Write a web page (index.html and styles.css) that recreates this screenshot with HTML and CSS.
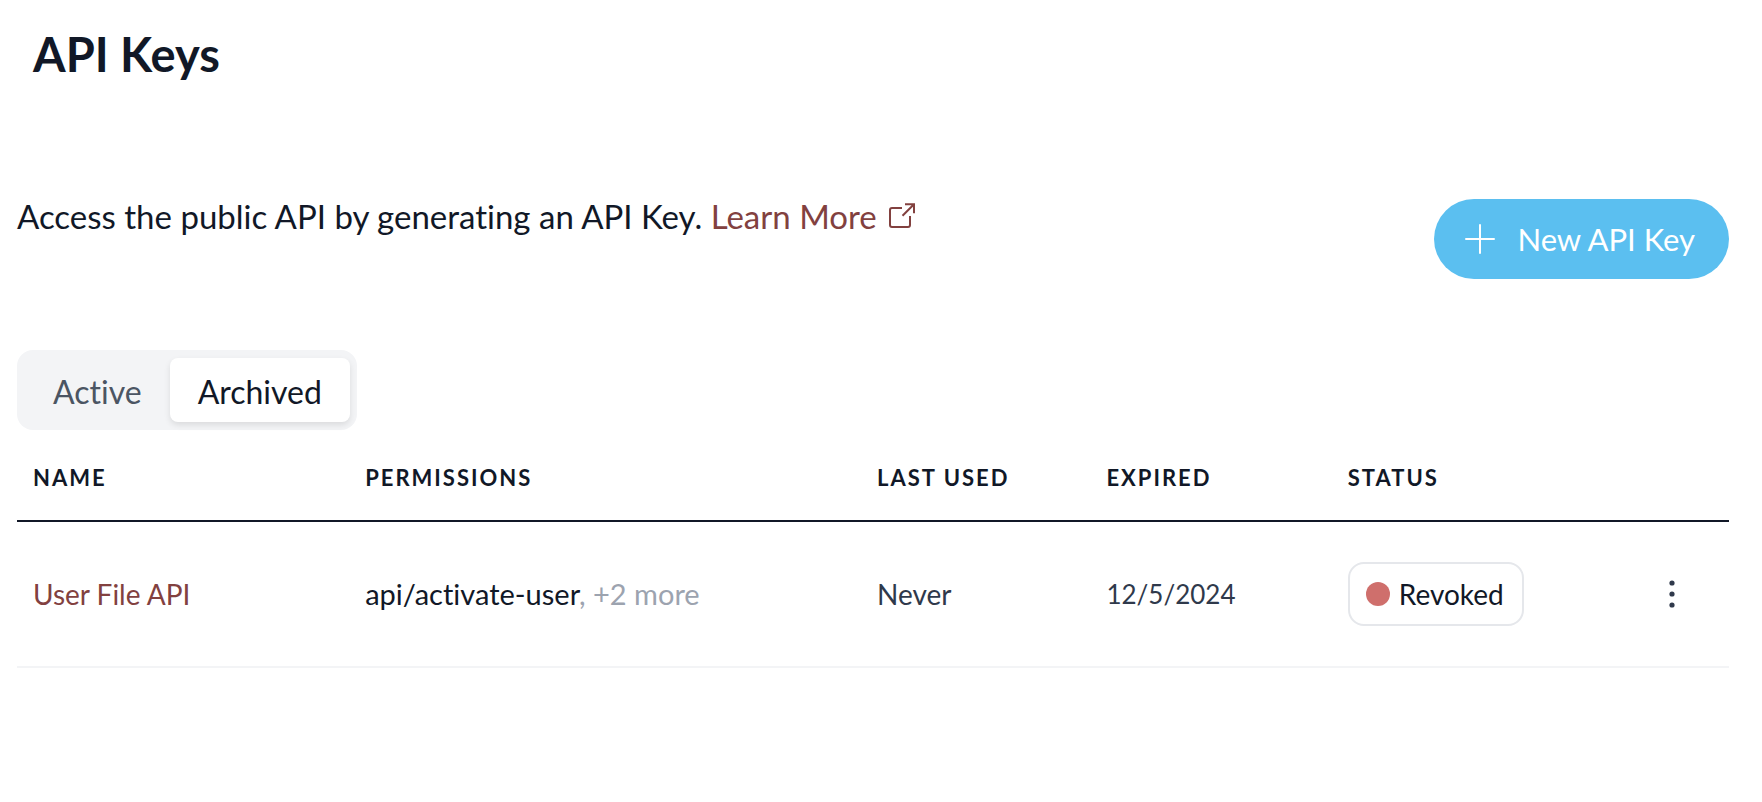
FILE: index.html
```
<!DOCTYPE html>
<html lang="en">
<head>
  <meta charset="UTF-8" />
  <meta name="viewport" content="width=device-width, initial-scale=1" />
  <title>API Keys</title>
  <link rel="stylesheet" href="styles.css">
</head>
<body>
  <main class="page">
    <h1>API Keys</h1>

    <div class="intro">
      <p>
        Access the public API by generating an API Key.
        <a class="learn-more" href="#">Learn More
          <svg class="external" viewBox="0 0 26 26" aria-hidden="true">
            <path d="M13 5H3a2 2 0 0 0-2 2v15a2 2 0 0 0 2 2h16a2 2 0 0 0 2-2V13" />
            <path d="M16 1.200h9v9M25 1.200L13.500 12.700" />
          </svg>
        </a>
      </p>
      <button class="new-key" type="button">
        <svg viewBox="0 0 30 30" aria-hidden="true"><path d="M15 1v28M1 15h28" /></svg>
        New API Key
      </button>
    </div>

    <div class="tabs" role="tablist">
      <button class="tab" type="button" role="tab" aria-selected="false">Active</button>
      <button class="tab selected" type="button" role="tab" aria-selected="true">Archived</button>
    </div>

    <table class="keys">
      <colgroup>
        <col class="col-name">
        <col class="col-permissions">
        <col class="col-used">
        <col class="col-expired">
        <col class="col-status">
        <col class="col-actions">
      </colgroup>
      <thead>
        <tr>
          <th scope="col">NAME</th>
          <th scope="col">PERMISSIONS</th>
          <th scope="col">LAST USED</th>
          <th scope="col">EXPIRED</th>
          <th scope="col">STATUS</th>
          <td></td>
        </tr>
      </thead>
      <tbody>
        <tr>
          <td><a href="#">User File API</a></td>
          <td class="permissions">api/activate-user<span class="more">, +2 more</span></td>
          <td>Never</td>
          <td class="date">12/5/2024</td>
          <td><span class="badge"><span class="dot"></span>Revoked</span></td>
          <td class="actions">
            <button class="menu" type="button" aria-label="Key actions">
              <svg viewBox="0 0 6 28" aria-hidden="true">
                <circle cx="3" cy="3" r="2.600" />
                <circle cx="3" cy="14" r="2.600" />
                <circle cx="3" cy="25" r="2.600" />
              </svg>
            </button>
          </td>
        </tr>
      </tbody>
    </table>
  </main>
</body>
</html>
```
FILE: styles.css
```
* { box-sizing: border-box; }

body {
  margin: 0;
  background: #fff;
  color: #111827;
  font-family: Lato, "Liberation Sans", sans-serif;
  font-size: 32px;
  line-height: 40px;
  font-variant-ligatures: none;
}

button {
  border: none;
  font: inherit;
  font-variant-ligatures: none;
  cursor: pointer;
}

a {
  color: #82413f;
  text-decoration: none;
}

.page {
  padding: 24px 33px 24px 17px;
}

h1 {
  margin: 0 0 115px;
  padding-left: 16px;
  font-size: 47px;
  line-height: 60px;
}

.intro {
  display: flex;
  justify-content: space-between;
  align-items: flex-start;
  margin-bottom: 71px;
}

.intro p {
  margin: 0;
  font-size: 33px;
  line-height: 34px;
}

.external {
  width: 26px;
  height: 26px;
  margin-left: 4px;
  fill: none;
  stroke: currentColor;
  stroke-width: 2;
}

.new-key {
  display: flex;
  align-items: center;
  gap: 22px;
  height: 80px;
  padding: 0 34px 0 31px;
  border-radius: 40px;
  background: #5bbff0;
  color: #fff;
  font-size: 31px;
}

.new-key svg {
  width: 30px;
  height: 30px;
  stroke: currentColor;
  stroke-width: 2;
  stroke-linecap: round;
}

.tabs {
  display: inline-flex;
  padding: 8px 7px 8px 8px;
  border-radius: 16px;
  background: #f3f4f6;
}

.tab {
  height: 64px;
  padding: 4px 28px 0;
  border-radius: 8px;
  background: none;
  color: #4b5563;
}

.tab.selected {
  background: #fff;
  color: #111827;
  box-shadow: 0 3px 6px rgba(0, 0, 0, 0.1);
}

.keys {
  width: 100%;
  table-layout: fixed;
  border-collapse: separate;
  border-spacing: 0;
  font-size: 28px;
}

.col-name { width: 19.4%; }
.col-permissions { width: 29.9%; }
.col-used { width: 13.4%; }
.col-expired { width: 14.1%; }
.col-status { width: 16.6%; }
.col-actions { width: 6.6%; }

.keys th,
.keys td {
  padding: 0 16px;
  text-align: left;
}

.keys thead th,
.keys thead td {
  height: 92px;
  padding-top: 6px;
  border-bottom: 2px solid #111827;
  font-size: 22px;
  letter-spacing: 2px;
}

.keys tbody td {
  height: 146px;
  border-bottom: 2px solid #f3f4f6;
  color: #2f394b;
}

.keys .permissions {
  color: #111827;
  font-size: 29px;
}

.keys .date {
  font-size: 26px;
}

.more {
  color: #9ca3af;
}

.badge {
  display: inline-flex;
  align-items: center;
  gap: 9px;
  height: 64px;
  padding: 0 18px 0 16px;
  border: 2px solid #e5e7eb;
  border-radius: 16px;
  color: #111827;
  vertical-align: middle;
}

.dot {
  width: 24px;
  height: 24px;
  border-radius: 50%;
  background: #cf6f6c;
}

.keys .actions {
  text-align: center;
}

.menu {
  padding: 16px;
  background: none;
  color: #2f394b;
  vertical-align: middle;
}

.menu svg {
  display: block;
  width: 6px;
  height: 28px;
  fill: currentColor;
}
```
